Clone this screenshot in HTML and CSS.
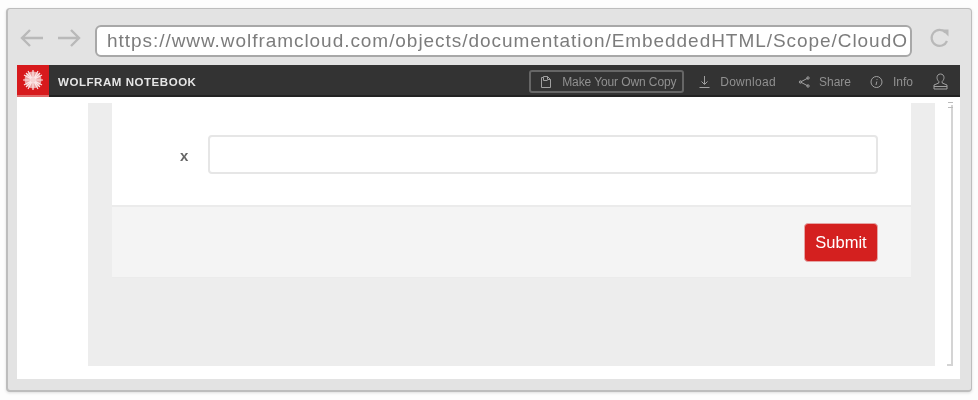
FILE: index.html
```html
<!DOCTYPE html>
<html lang="en">
<head>
  <meta charset="UTF-8">
  <title>Wolfram Notebook</title>
  <link rel="stylesheet" href="styles.css">
</head>
<body>
  <div class="janela">
    <div class="barra-url">
      <svg class="seta" width="26" height="20" viewBox="0 0 26 20"><path d="M24 10H3M11 2l-8 8 8 8"/></svg>
      <svg class="seta" width="26" height="20" viewBox="0 0 26 20"><path d="M2 10h21M15 2l8 8-8 8"/></svg>
      <div class="url">https://www.wolframcloud.com/objects/documentation/EmbeddedHTML/Scope/CloudO</div>
      <svg class="recarregar" width="22" height="22" viewBox="0 0 22 22"><path d="M17.5 5.5A8 8 0 1 0 19 14"/><path class="cheio" d="M13.5 2.500h7v7z"/></svg>
    </div>

    <div class="pagina">
      <div class="menu">
        <div class="logo">
          <svg width="20" height="20" viewBox="0 0 20 20">
            <g class="estrela">
              <circle cx="10" cy="10" r="8.500"/>
              <path d="M10 0v20M0 10h20M3 3l14 14M17 3L3 17M5 1l10 18M15 1L5 19M1 5l18 10M19 5L1 15"/>
              <circle class="miolo" cx="10" cy="10" r="2.500"/>
            </g>
          </svg>
        </div>
        <div class="marca">WOLFRAM NOTEBOOK</div>
        <div class="acoes">
          <div class="copia">
            <svg class="icone" width="12" height="14" viewBox="0 0 12 14"><path d="M1.500 2.500h2v-1h4l3 3v8h-9zM7.500 1.500v3h3M3.500 2.500v3h4"/></svg>
            Make Your Own Copy
          </div>
          <div class="acao download">
            <svg class="icone" width="11" height="14" viewBox="0 0 11 14"><path d="M5.500 1v8M2.500 6.500l3 3 3-3M.5 12.500h10"/></svg>
            Download
          </div>
          <div class="acao share">
            <svg class="icone" width="12" height="14" viewBox="0 0 12 14"><path d="M10 3L2.500 7l7.500 4"/><circle cx="10" cy="3" r="1.200"/><circle cx="2.500" cy="7" r="1.200"/><circle cx="10" cy="11" r="1.200"/></svg>
            Share
          </div>
          <div class="acao info">
            <svg class="icone" width="13" height="14" viewBox="0 0 13 14"><circle cx="6.500" cy="7" r="5.500"/><path d="M7 4v.8M6.800 6.500L6 10"/></svg>
            Info
          </div>
          <svg class="icone usuario" width="15" height="17" viewBox="0 0 15 17"><path d="M7.500 1c2.300 0 3.500 1.700 3.500 3.600 0 1.600-.8 3-1.800 3.800v1.600l4.800 2v4H1v-4l4.800-2V8.400C4.800 7.600 4 6.200 4 4.600 4 2.700 5.200 1 7.500 1zM1 13.500h13"/></svg>
        </div>
      </div>

      <div class="conteudo">
        <div class="painel">
          <div class="cartao">
            <div class="campo">
              <label class="rotulo">x</label>
              <input class="entrada" type="text">
            </div>
            <div class="rodape">
              <button class="enviar">Submit</button>
            </div>
          </div>
        </div>
        <div class="rolagem"></div>
      </div>
    </div>
  </div>
</body>
</html>
```

FILE: styles.css
```css
html, body {
  margin: 0;
  height: 400px;
  overflow: hidden;
  background-color: #fdfdfd;
}

body {
  padding: 8px 0 0 6px;
  box-sizing: border-box;
  font-family: "Liberation Sans", Arial, sans-serif;
}

.janela {
  width: 966px;
  height: 384px;
  box-sizing: border-box;
  padding: 0 11px 11px 9px;
  background-color: #e3e3e3;
  border: 1px solid #bdbdbd;
  border-left-width: 2px;
  border-bottom-width: 2px;
  border-radius: 4px;
  box-shadow: 0 1px 3px #ddd;
  display: flex;
  flex-direction: column;
  filter: blur(0.6px);
}

.barra-url {
  height: 56px;
  flex: none;
  display: flex;
  align-items: center;
  padding-left: 2px;
  box-sizing: border-box;
  padding-top: 1px;
}

.seta {
  margin-right: 11px;
  fill: none;
  stroke: #b9b9b9;
  stroke-width: 2.4;
}

.url {
  width: 817px;
  height: 32px;
  box-sizing: border-box;
  margin: 6px 0 0 2px;
  padding-left: 10px;
  background-color: white;
  border: 2px solid #a8a8a8;
  border-radius: 6px;
  color: #7c7c7c;
  font-size: 19px;
  letter-spacing: 0.95px;
  line-height: 27px;
  white-space: nowrap;
  overflow: hidden;
}

.recarregar {
  margin-left: 16px;
  fill: none;
  stroke: #b9b9b9;
  stroke-width: 2.2;
}

.recarregar .cheio {
  fill: #b9b9b9;
  stroke: none;
}

.pagina {
  flex: 1;
  background-color: white;
  display: flex;
  flex-direction: column;
}

.menu {
  height: 32px;
  flex: none;
  box-sizing: border-box;
  background-color: #333;
  border-bottom: 2px solid #222;
  display: flex;
  align-items: center;
}

.logo {
  width: 32px;
  height: 32px;
  flex: none;
  align-self: flex-start;
  background-color: #d71a1d;
  border-bottom: 2px solid #e06a6a;
  box-sizing: border-box;
  display: flex;
  align-items: center;
  justify-content: center;
}

.estrela circle {
  fill: #eba3a3;
}

.estrela .miolo {
  fill: #f6d3d3;
}

.estrela path {
  stroke: #fbe6e6;
  stroke-width: 1.2;
  fill: none;
}

.marca {
  margin: 3px 0 0 9px;
  color: #e6e6e6;
  font-size: 11.500px;
  font-weight: bold;
  letter-spacing: 0.55px;
}

.acoes {
  margin-left: auto;
  padding-top: 3px;
  display: flex;
  align-items: center;
  color: #909090;
  font-size: 12px;
  white-space: nowrap;
}

.icone {
  fill: none;
  stroke: #a0a0a0;
  stroke-width: 1;
}

.copia {
  width: 155px;
  height: 23px;
  box-sizing: border-box;
  padding-left: 9px;
  border: 2px solid #666;
  border-radius: 3px;
  display: flex;
  align-items: center;
  gap: 10px;
  letter-spacing: -0.1px;
}

.acao {
  display: flex;
  align-items: center;
  gap: 10px;
}

.download {
  margin-left: 15px;
  letter-spacing: 0.3px;
}

.share {
  margin-left: 22px;
  gap: 9px;
}

.info {
  margin-left: 19px;
}

.usuario {
  margin-left: 20px;
  margin-right: 12px;
}

.conteudo {
  flex: 1;
  display: flex;
  padding: 6px 0 13px 71px;
  min-height: 0;
}

.painel {
  width: 847px;
  background-color: #ededed;
  padding: 0 24px;
  box-sizing: border-box;
}

.cartao {
  background-color: white;
}

.campo {
  height: 102px;
  box-sizing: border-box;
  display: flex;
  align-items: center;
  padding-right: 33px;
}

.rotulo {
  width: 96px;
  box-sizing: border-box;
  padding-left: 68px;
  padding-top: 3px;
  color: #666;
  font-size: 15px;
  font-weight: bold;
}

.entrada {
  flex: 1;
  height: 39px;
  box-sizing: border-box;
  background-color: white;
  border: 2px solid #e6e6e6;
  border-radius: 4px;
}

.rodape {
  height: 73px;
  box-sizing: border-box;
  background-color: #f4f4f4;
  border-top: 2px solid #ebebeb;
  border-bottom: 1px solid #ebebeb;
  display: flex;
  align-items: center;
  justify-content: flex-end;
  padding-right: 33px;
}

.enviar {
  width: 74px;
  height: 39px;
  background-color: #d4201f;
  color: white;
  border: 1px solid #e5a5a5;
  border-radius: 4px;
  font-family: inherit;
  font-size: 16.500px;
}

.rolagem {
  position: relative;
  width: 2px;
  margin: 2px 0 0 16px;
  background-color: #d4d4d4;
}

.rolagem::before {
  content: "";
  position: absolute;
  top: -3px;
  right: 0;
  width: 5px;
  height: 4px;
  border-top: 1px solid #bbb;
  border-bottom: 1px solid #bbb;
}

.rolagem::after {
  content: "";
  position: absolute;
  bottom: 0;
  right: 0;
  width: 6px;
  height: 2px;
  background-color: #d4d4d4;
}
```
